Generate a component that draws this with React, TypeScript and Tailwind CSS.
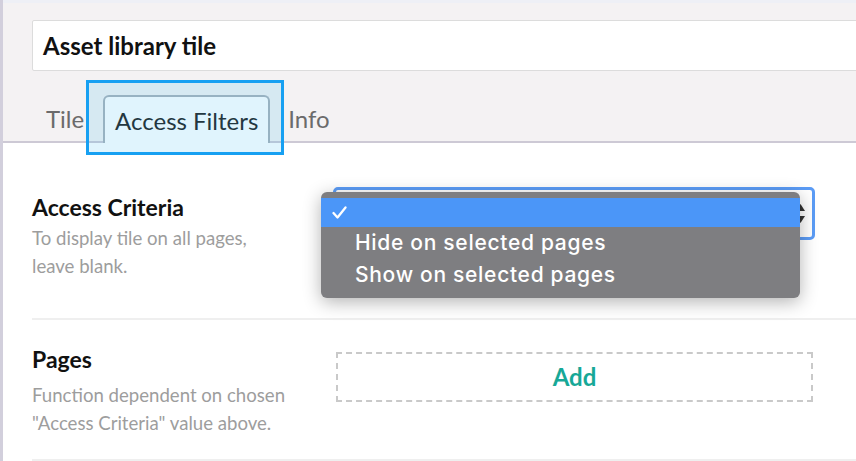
import React from 'react';

const menuItems = ['Hide on selected pages', 'Show on selected pages'];

export default function App() {
  return (
    <div className="relative w-[856px] h-[461px] overflow-hidden bg-white font-['Lato','Liberation_Sans',sans-serif]">
      <div className="flex flex-col h-full border-l-[3px] border-[#d2cfdc]">
        {/* Header: title input + tabs */}
        <div className="h-[3px] bg-[#eef0f6]" />
        <div className="bg-[#f4f2f3] pt-[17px] pl-[29px] border-b-2 border-[#cdc9d5]">
          <div className="h-[51px] -mr-4 bg-white border border-[#dcdcdc] rounded-[2px] flex items-center pl-[10px]">
            <span className="text-[24px] font-bold text-[#111]">Asset library tile</span>
          </div>
          <div className="flex items-end h-[70px]">
            <div className="h-[47px] pl-[14px] pr-[19px] flex items-center pt-[3px] text-[24px] text-[#6b6b6b]">Tile</div>
            <div className="h-[48px] w-[167px] -mb-[2px] pb-[2px] bg-white border-2 border-b-0 border-[#aab2ba] rounded-t-[6px] flex items-center justify-center pt-[3px] text-[24px] text-[#222]">
              Access Filters
            </div>
            <div className="h-[47px] pl-[18px] flex items-center pt-[3px] text-[24px] text-[#6b6b6b]">Info</div>
          </div>
        </div>

        {/* Access Criteria */}
        <div className="ml-[29px] flex border-b-2 border-[#efefef] h-[177px]">
          <div className="w-[301px] pt-[50px]">
            <div className="text-[23px] leading-[28px] font-bold text-[#111]">Access Criteria</div>
            <div className="mt-[3px] text-[18.6px] leading-[28px] text-[#9d9d9d]">
              To display tile on all pages,
              <br />
              leave blank.
            </div>
          </div>
          <div className="relative mt-[44px] w-[482px] h-[53px]">
            <div className="h-full bg-white border-[3px] border-[#5b9cf6] rounded-[5px] flex items-center justify-end pr-[7px]">
              <svg width="9" height="19" viewBox="0 0 9 19">
                <path d="M4.5 0 L9 7 L0 7 Z" fill="#333" />
                <path d="M4.5 19 L9 12 L0 12 Z" fill="#333" />
              </svg>
            </div>
            {/* open dropdown */}
            <div className="absolute left-[-12px] top-[5px] w-[479px] h-[106px] bg-[#7e7e81] rounded-[6px] shadow-[0_4px_18px_rgba(0,0,0,0.3)] pt-[6px] font-['Inter','Liberation_Sans',sans-serif] text-[21px] font-medium tracking-[0.7px] text-white">
              <div className="h-[29px] bg-[#4b96f8] flex items-center pl-[11px]">
                <svg width="15" height="13" viewBox="0 0 15 13">
                  <path d="M1.5 7 L5.5 11.5 L13.5 1.5" fill="none" stroke="#fff" strokeWidth="2.3" strokeLinecap="round" strokeLinejoin="round" />
                </svg>
              </div>
              {menuItems.map((item) => (
                <div key={item} className="h-[32px] flex items-center pl-[34px]">
                  {item}
                </div>
              ))}
            </div>
          </div>
        </div>

        {/* Pages */}
        <div className="ml-[29px] flex border-b-2 border-[#efefef] h-[141px]">
          <div className="w-[304px] pt-[25px]">
            <div className="text-[23px] leading-[28px] font-bold text-[#111]">Pages</div>
            <div className="mt-[8px] text-[18.6px] leading-[28px] text-[#9d9d9d]">
              Function dependent on chosen
              <br />
              "Access Criteria" value above.
            </div>
          </div>
          <div className="mt-[32px] w-[477px] h-[50px] border-2 border-dashed border-[#c9c9c9] flex items-center justify-center">
            <span className="text-[24px] font-bold text-[#17a897]">Add</span>
          </div>
        </div>
      </div>

      {/* highlight around the active tab */}
      <div className="absolute left-[86px] top-[80px] w-[198px] h-[75px] border-[3px] border-[#17a0f2] bg-[#30b6f2]/15" />
    </div>
  );
}
